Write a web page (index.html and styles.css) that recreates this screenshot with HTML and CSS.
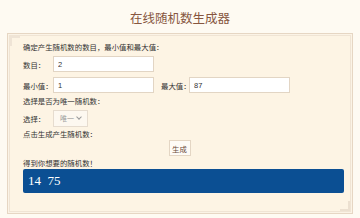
FILE: index.html
```html
<!DOCTYPE html>
<html lang="zh">
  <head>
    <meta charset="UTF-8" />
    <title>在线随机数生成器</title>
    <link rel="stylesheet" href="styles.css">
  </head>
  <body>
    <div class="page">
      <h1 class="title">在线随机数生成器</h1>

      <div class="panel">
        <span class="corner tl"></span>
        <span class="corner br"></span>

        <div class="line">确定产生随机数的数目，最小值和最大值：</div>

        <div class="row">
          <label>数目：</label>
          <input class="field" type="text" value="2">
        </div>

        <div class="row">
          <label>最小值：</label>
          <input class="field" type="text" value="1">
          <label class="max-label">最大值：</label>
          <input class="field" type="text" value="87">
        </div>

        <div class="line">选择是否为唯一随机数：</div>

        <div class="row">
          <label>选择：</label>
          <div class="select">唯一 <span class="chev"></span></div>
        </div>

        <div class="line">点击生成产生随机数：</div>

        <div class="btn-row">
          <button class="btn">生成</button>
        </div>

        <div class="line">得到你想要的随机数！</div>

        <div class="result">14&nbsp;&nbsp;75</div>
      </div>
    </div>
  </body>
</html>
```

FILE: styles.css
```css
body {
  margin: 0;
  background: #fefaf2;
  font-family: "Noto Sans CJK SC", "Liberation Sans", sans-serif;
  color: #333;
}

.page {
  width: 360px;
  height: 218px;
  overflow: hidden;
}

.title {
  margin: 0;
  height: 33px;
  line-height: 35px;
  text-align: center;
  font-size: 12.5px;
  font-weight: normal;
  color: #87563f;
}

.panel {
  position: relative;
  margin: 0 7px;
  height: 181px;
  box-sizing: border-box;
  border: 1px solid #e6d6c3;
  box-shadow: inset 0 0 0 1px #fbf3e6, inset 0 0 0 2px #f0e4d4;
  background: #fdf4e4;
  padding: 8px 10px 0 15px;
  font-size: 7.4px;
}

.corner {
  position: absolute;
  width: 8px;
  height: 8px;
}

.corner.tl {
  top: 2px;
  left: 2px;
  border-top: 2px solid #efe4d6;
  border-left: 2px solid #efe4d6;
}

.corner.br {
  bottom: 2px;
  right: 2px;
  border-bottom: 2px solid #ece0d0;
  border-right: 2px solid #ece0d0;
}

.line {
  height: 10px;
  line-height: 10px;
  white-space: nowrap;
}

.row {
  display: flex;
  align-items: center;
  height: 16px;
  margin-top: 5px;
}

.row label {
  width: 30px;
  white-space: nowrap;
}

.row label.max-label {
  width: 28px;
  margin-left: 7px;
}

.field {
  width: 101px;
  height: 16px;
  box-sizing: border-box;
  border: 1px solid #e2d5c4;
  background: #fff;
  font-family: "Liberation Sans", sans-serif;
  font-size: 7.5px;
  color: #333;
  padding: 0 4px;
  margin: 0;
  outline: none;
}

.row + .row {
  margin-top: 5px;
}

.row + .line {
  margin-top: 3px;
}

.line + .row {
  margin-top: 4px;
}

.select {
  display: flex;
  align-items: center;
  gap: 3px;
  width: 35px;
  height: 17px;
  box-sizing: border-box;
  border: 1px solid #e6dccf;
  background: #fdf8f0;
  padding-left: 6px;
  color: #999;
  font-size: 7px;
}

.chev {
  width: 3px;
  height: 3px;
  border-right: 1px solid #9a9a9a;
  border-bottom: 1px solid #9a9a9a;
  transform: rotate(45deg);
  margin-top: -2px;
}

.btn-row {
  display: flex;
  justify-content: center;
  height: 17px;
  margin-top: 1px;
  margin-right: 6px;
}

.btn {
  width: 22px;
  height: 16px;
  padding: 0;
  border: 1px solid #e4d6c4;
  background: #fefbf6;
  color: #6c4a3c;
  font-family: "Noto Sans CJK SC", sans-serif;
  font-size: 7.4px;
}

.btn-row + .line {
  margin-top: 1px;
}

.result {
  margin-top: 1px;
  width: 321px;
  height: 24px;
  box-sizing: border-box;
  background: #0b4f93;
  border-radius: 2px;
  color: #fff;
  font-family: "Liberation Serif", serif;
  font-size: 13px;
  line-height: 24px;
  padding-left: 5px;
}
```
